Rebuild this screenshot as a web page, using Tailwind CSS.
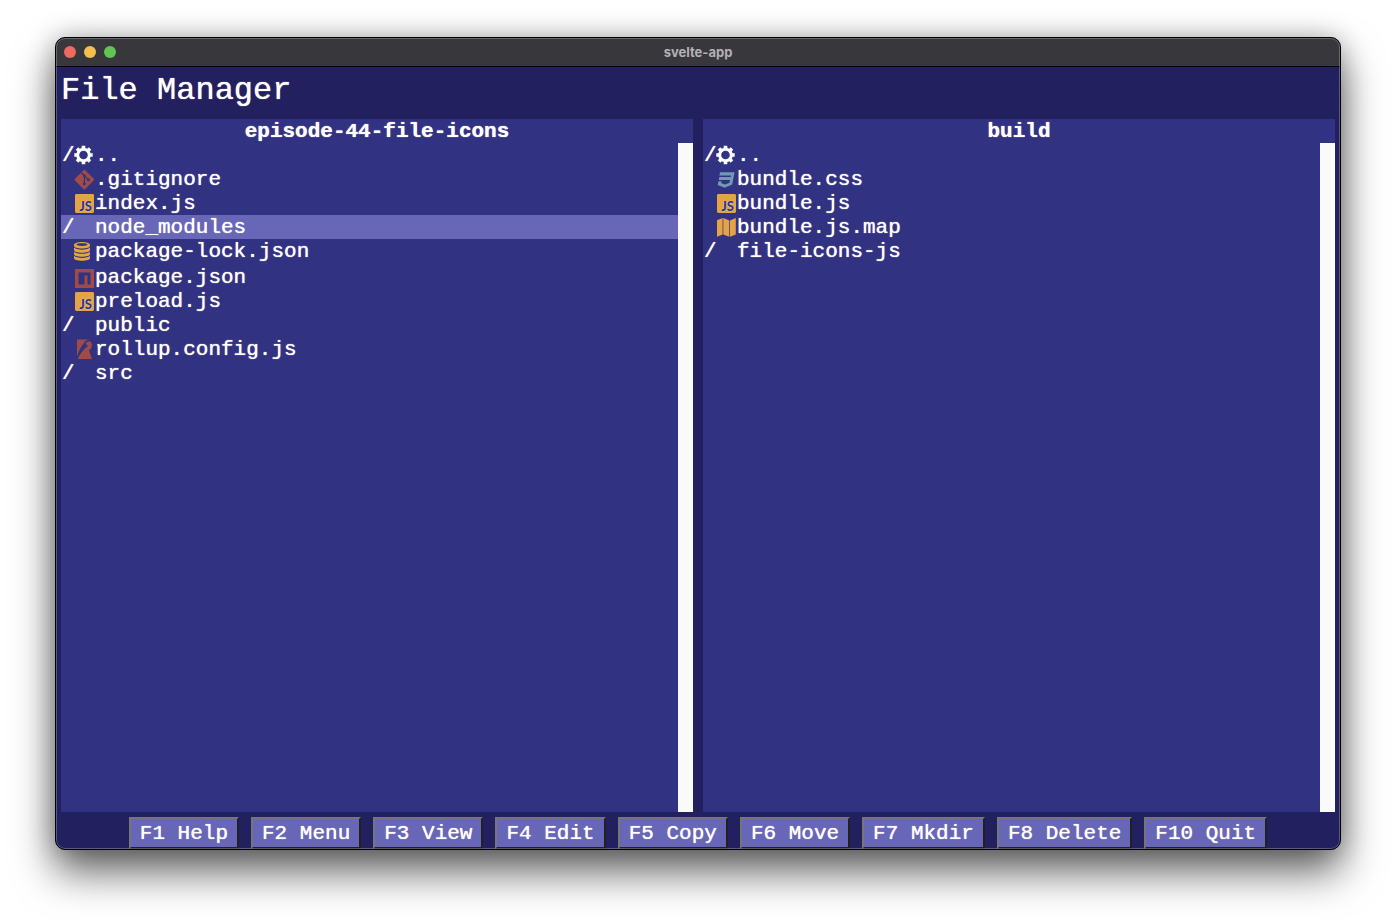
<!DOCTYPE html>
<html lang="en">
<head>
<meta charset="utf-8">
<title>svelte-app</title>
<script src="https://cdn.jsdelivr.net/npm/@tailwindcss/browser@4"></script>
</head>
<body class="bg-white">
<svg class="hidden" aria-hidden="true">
  <symbol id="gear" viewBox="0 0 21 24">
    <g fill="none" stroke="#fff">
      <circle cx="9.5" cy="12" r="5.800" stroke-width="3"/>
      <path stroke-width="3.600" d="M9.500 5.600V2.800M9.500 18.400v2.800M3.100 12H.3M15.900 12h2.800M5 7.500 3 5.500M14 7.500l2-2M5 16.500l-2 2M14 16.500l2 2"/>
    </g>
  </symbol>
  <symbol id="git" viewBox="0 0 21 24">
    <path fill="#a04b46" transform="translate(.6 3) scale(.81)" d="M23.546 10.93L13.067.452c-.604-.603-1.582-.603-2.188 0L8.708 2.627l2.76 2.76c.645-.215 1.379-.07 1.889.441.516.515.658 1.258.438 1.9l2.658 2.66c.645-.223 1.387-.078 1.9.435.721.72.721 1.884 0 2.604-.719.719-1.881.719-2.6 0-.539-.541-.674-1.337-.404-1.996L12.86 8.955v6.525c.176.086.342.203.488.348.713.721.713 1.883 0 2.6-.719.721-1.889.721-2.609 0-.719-.719-.719-1.879 0-2.598.182-.18.387-.316.605-.406V8.835c-.217-.091-.424-.222-.6-.401-.545-.545-.676-1.342-.396-2.009L7.636 3.7.45 10.881c-.6.605-.6 1.584 0 2.189l10.48 10.477c.604.604 1.582.604 2.186 0l10.43-10.43c.605-.603.605-1.582 0-2.187"/>
  </symbol>
  <symbol id="js" viewBox="0 0 21 24">
    <rect x="1" y="3" width="19" height="19" rx="1.400" fill="#e4a344"/>
    <text x="18" y="20" text-anchor="end" font-family="Lato, sans-serif" font-weight="900" font-size="13" fill="#323282">JS</text>
  </symbol>
  <symbol id="db" viewBox="0 0 21 24">
    <g fill="#e4a344">
      <path fill-rule="evenodd" d="M8 3c4.400 0 8 1.100 8 3v.8c0 1.700-3.600 2.800-8 2.800S0 8.500 0 6.800V6c0-1.900 3.600-3 8-3zm0 1.300c-3 0-5.600.5-5.600 1.300S5 6.900 8 6.900s5.600-.5 5.600-1.300S11 4.300 8 4.300z"/>
      <path d="M0 8.600C1.500 10 4.500 10.700 8 10.700s6.500-.7 8-2.100v2.300c0 1.700-3.600 2.800-8 2.800s-8-1.100-8-2.800z"/>
      <path d="M0 12.700c1.500 1.400 4.500 2.100 8 2.100s6.500-.7 8-2.100V15c0 1.700-3.600 2.800-8 2.800S0 16.700 0 15z"/>
      <path d="M0 16.800c1.500 1.400 4.500 2.100 8 2.100s6.500-.7 8-2.100v2.100c0 1.700-3.600 2.800-8 2.800s-8-1.100-8-2.800z"/>
    </g>
  </symbol>
  <symbol id="npm" viewBox="0 0 21 24">
    <path fill="#a04b46" fill-rule="evenodd" d="M1 4h19v19H1zM4.500 7.500v12h6v-9h3v9h3v-12z"/>
  </symbol>
  <symbol id="rollup" viewBox="0 0 21 24">
    <g fill="#a04b46">
      <path d="M3 2.500h12c-2 .5-3.400 1.300-4.500 2.700C7.500 8.600 5 13 3 19.500z"/>
      <path d="M11.400 7.200c1-2 2.700-3.100 4.300-2.800 1.600.5 2.400 2 2.300 3.900-.1 2.300-1.300 4-3 5L18 22H3.800C5.300 17.800 8.500 14 11.800 10.600c.9 0 1.700-.7 1.700-1.700s-.8-1.700-2.100-1.700z"/>
    </g>
  </symbol>
  <symbol id="css3" viewBox="0 0 21 24">
    <path fill="#7299b4" d="M4 5.300h14.600l-2.400 12.300-7.600 3.100-6.900-2.700.8-3.800h3l-.4 1.700 4 1.500 4.300-1.600.6-2.700H2.800l.6-3h11.300l.3-1.700H3.400z"/>
  </symbol>
  <symbol id="map" viewBox="0 0 21 24">
    <g fill="#e4a344">
      <path d="M1 5.300 6.600 3v16.400L1 21.800zM7.300 3l6 2.500v16.200l-6-2.300zM14 5.500 19.800 3v16.400L14 21.700z"/>
    </g>
  </symbol>
</svg>

<div class="flex h-screen px-[55px] pt-[37px] pb-[73px]">
  <main class="relative flex min-w-0 flex-1 flex-col overflow-hidden rounded-[10px] border border-black bg-[#22205f] font-['Liberation_Mono',monospace] text-[21px] leading-6 text-white shadow-[0_22px_42px_rgba(0,0,0,0.6),0_0_26px_rgba(0,0,0,0.25)]">
    <div class="pointer-events-none absolute inset-0 rounded-[9px] border border-white/25"></div>
    <div class="grid h-[29px] shrink-0 grid-cols-3 items-center border-b border-black bg-[#38373c] px-2">
      <div class="flex gap-2">
        <button aria-label="Close" class="size-3 rounded-full bg-[#ed6a5e]"></button>
        <button aria-label="Minimize" class="size-3 rounded-full bg-[#f4bf4f]"></button>
        <button aria-label="Zoom" class="size-3 rounded-full bg-[#61c554]"></button>
      </div>
      <div class="text-center font-[Inter,sans-serif] text-[13px] leading-4 font-bold text-[#b3b1b6]">svelte-app</div>
    </div>
    <h1 class="h-[52px] shrink-0 px-[5px] text-[32px] leading-[48px] text-shadow-[0_0_1px_#fff]">File Manager</h1>

    <div class="grid min-h-0 flex-1 grid-cols-2 gap-[10px] px-[5px]">
      <section class="flex min-h-0 flex-col bg-[#323282]">
        <h2 class="h-6 text-center leading-[26px] font-bold text-shadow-[0_0_1px_#fff]">episode-44-file-icons</h2>
        <div class="flex min-h-0 flex-1">
          <ul class="min-w-0 flex-1 leading-[26px] text-shadow-[0_0_1px_#fff]">
            <li class="flex h-6"><span class="w-[13px] pl-px">/</span><svg class="h-6 w-[21px]"><use href="#gear"/></svg><span>..</span></li>
            <li class="flex h-6 pl-[13px]"><svg class="h-6 w-[21px]"><use href="#git"/></svg><span>.gitignore</span></li>
            <li class="flex h-6 pl-[13px]"><svg class="h-6 w-[21px]"><use href="#js"/></svg><span>index.js</span></li>
            <li class="flex h-6 bg-[#6766b7]"><span class="w-[34px] pl-px">/</span><span>node_modules</span></li>
            <li class="flex h-6 pl-[13px]"><svg class="h-6 w-[21px]"><use href="#db"/></svg><span>package-lock.json</span></li>
            <li class="flex h-[26px] pt-[2px] pl-[13px]"><svg class="h-6 w-[21px]"><use href="#npm"/></svg><span>package.json</span></li>
            <li class="flex h-6 pl-[13px]"><svg class="h-6 w-[21px]"><use href="#js"/></svg><span>preload.js</span></li>
            <li class="flex h-6"><span class="w-[34px] pl-px">/</span><span>public</span></li>
            <li class="flex h-6 pl-[13px]"><svg class="h-6 w-[21px]"><use href="#rollup"/></svg><span>rollup.config.js</span></li>
            <li class="flex h-6"><span class="w-[34px] pl-px">/</span><span>src</span></li>
          </ul>
          <div class="w-[15px] bg-[#fafafa]"></div>
        </div>
      </section>
      <section class="flex min-h-0 flex-col bg-[#323282]">
        <h2 class="h-6 text-center leading-[26px] font-bold text-shadow-[0_0_1px_#fff]">build</h2>
        <div class="flex min-h-0 flex-1">
          <ul class="min-w-0 flex-1 leading-[26px] text-shadow-[0_0_1px_#fff]">
            <li class="flex h-6"><span class="w-[13px] pl-px">/</span><svg class="h-6 w-[21px]"><use href="#gear"/></svg><span>..</span></li>
            <li class="flex h-6 pl-[13px]"><svg class="h-6 w-[21px]"><use href="#css3"/></svg><span>bundle.css</span></li>
            <li class="flex h-6 pl-[13px]"><svg class="h-6 w-[21px]"><use href="#js"/></svg><span>bundle.js</span></li>
            <li class="flex h-6 pl-[13px]"><svg class="h-6 w-[21px]"><use href="#map"/></svg><span>bundle.js.map</span></li>
            <li class="flex h-6"><span class="w-[34px] pl-px">/</span><span>file-icons-js</span></li>
          </ul>
          <div class="w-[15px] bg-[#fafafa]"></div>
        </div>
      </section>
    </div>

    <footer class="flex shrink-0 justify-center gap-3 pt-[5px]">
      <button class="border-2 border-t-[#767676] border-r-[#212121] border-b-[#212121] border-l-[#767676] bg-[#6766b7] px-[9px] pt-[3px] pb-px text-shadow-[0_0_1px_#fff]">F1 Help</button>
      <button class="border-2 border-t-[#767676] border-r-[#212121] border-b-[#212121] border-l-[#767676] bg-[#6766b7] px-[9px] pt-[3px] pb-px text-shadow-[0_0_1px_#fff]">F2 Menu</button>
      <button class="border-2 border-t-[#767676] border-r-[#212121] border-b-[#212121] border-l-[#767676] bg-[#6766b7] px-[9px] pt-[3px] pb-px text-shadow-[0_0_1px_#fff]">F3 View</button>
      <button class="border-2 border-t-[#767676] border-r-[#212121] border-b-[#212121] border-l-[#767676] bg-[#6766b7] px-[9px] pt-[3px] pb-px text-shadow-[0_0_1px_#fff]">F4 Edit</button>
      <button class="border-2 border-t-[#767676] border-r-[#212121] border-b-[#212121] border-l-[#767676] bg-[#6766b7] px-[9px] pt-[3px] pb-px text-shadow-[0_0_1px_#fff]">F5 Copy</button>
      <button class="border-2 border-t-[#767676] border-r-[#212121] border-b-[#212121] border-l-[#767676] bg-[#6766b7] px-[9px] pt-[3px] pb-px text-shadow-[0_0_1px_#fff]">F6 Move</button>
      <button class="border-2 border-t-[#767676] border-r-[#212121] border-b-[#212121] border-l-[#767676] bg-[#6766b7] px-[9px] pt-[3px] pb-px text-shadow-[0_0_1px_#fff]">F7 Mkdir</button>
      <button class="border-2 border-t-[#767676] border-r-[#212121] border-b-[#212121] border-l-[#767676] bg-[#6766b7] px-[9px] pt-[3px] pb-px text-shadow-[0_0_1px_#fff]">F8 Delete</button>
      <button class="border-2 border-t-[#767676] border-r-[#212121] border-b-[#212121] border-l-[#767676] bg-[#6766b7] px-[9px] pt-[3px] pb-px text-shadow-[0_0_1px_#fff]">F10 Quit</button>
    </footer>
  </main>
</div>
</body>
</html>
